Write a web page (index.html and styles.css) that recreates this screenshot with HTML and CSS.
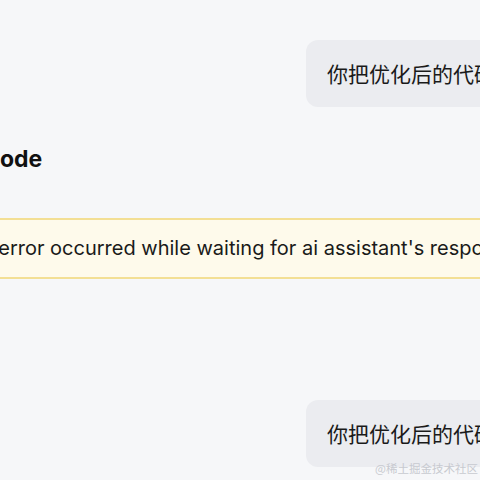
FILE: index.html
```html
<!DOCTYPE html>
<html lang="zh">
<head>
<meta charset="utf-8">
<link rel="stylesheet" href="styles.css">
</head>
<body>
<div class="chat">
  <div class="row-user">
    <div class="bubble">你把优化后的代码完整发给我</div>
  </div>
  <h2 class="heading">Code</h2>
  <div class="alert">An error occurred while waiting for ai assistant's response</div>
  <div class="row-user row-last">
    <div class="bubble">你把优化后的代码完整发给我</div>
  </div>
</div>
<div class="watermark">@稀土掘金技术社区</div>
</body>
</html>
```
FILE: styles.css
```css
html, body {
  margin: 0;
  padding: 0;
  width: 480px;
  height: 480px;
  overflow: hidden;
  background: #f6f7f9;
  font-family: Inter, "Noto Sans CJK SC", sans-serif;
  color: #1a1a1a;
}
.chat {
  display: flex;
  flex-direction: column;
  padding-top: 40px;
}
.row-user {
  display: flex;
  padding-left: 306px;
}
.bubble {
  background: #ebecf0;
  border-radius: 12px 0 0 12px;
  padding: 20px 0 20px 21px;
  font-size: 21px;
  line-height: 27px;
  white-space: nowrap;
  font-family: "Noto Sans CJK SC", sans-serif;
  width: 300px;
  flex: none;
}
.heading {
  margin: 38px 0 0 -17px;
  font-size: 23px;
  line-height: 28px;
  font-weight: 700;
  color: #111;
}
.alert {
  margin-top: 45px;
  margin-left: -33px;
  width: 640px;
  background: #fefaeb;
  border-top: 2px solid #f3df94;
  border-bottom: 2px solid #f3df94;
  padding: 15px 0;
  font-size: 20px;
  line-height: 27px;
  white-space: nowrap;
}
.row-last {
  margin-top: 121px;
}
.watermark {
  position: absolute;
  right: 2px;
  bottom: 4px;
  font-size: 11.5px;
  color: #c8cad0;
  font-family: "Noto Sans CJK SC", sans-serif;
}
```
